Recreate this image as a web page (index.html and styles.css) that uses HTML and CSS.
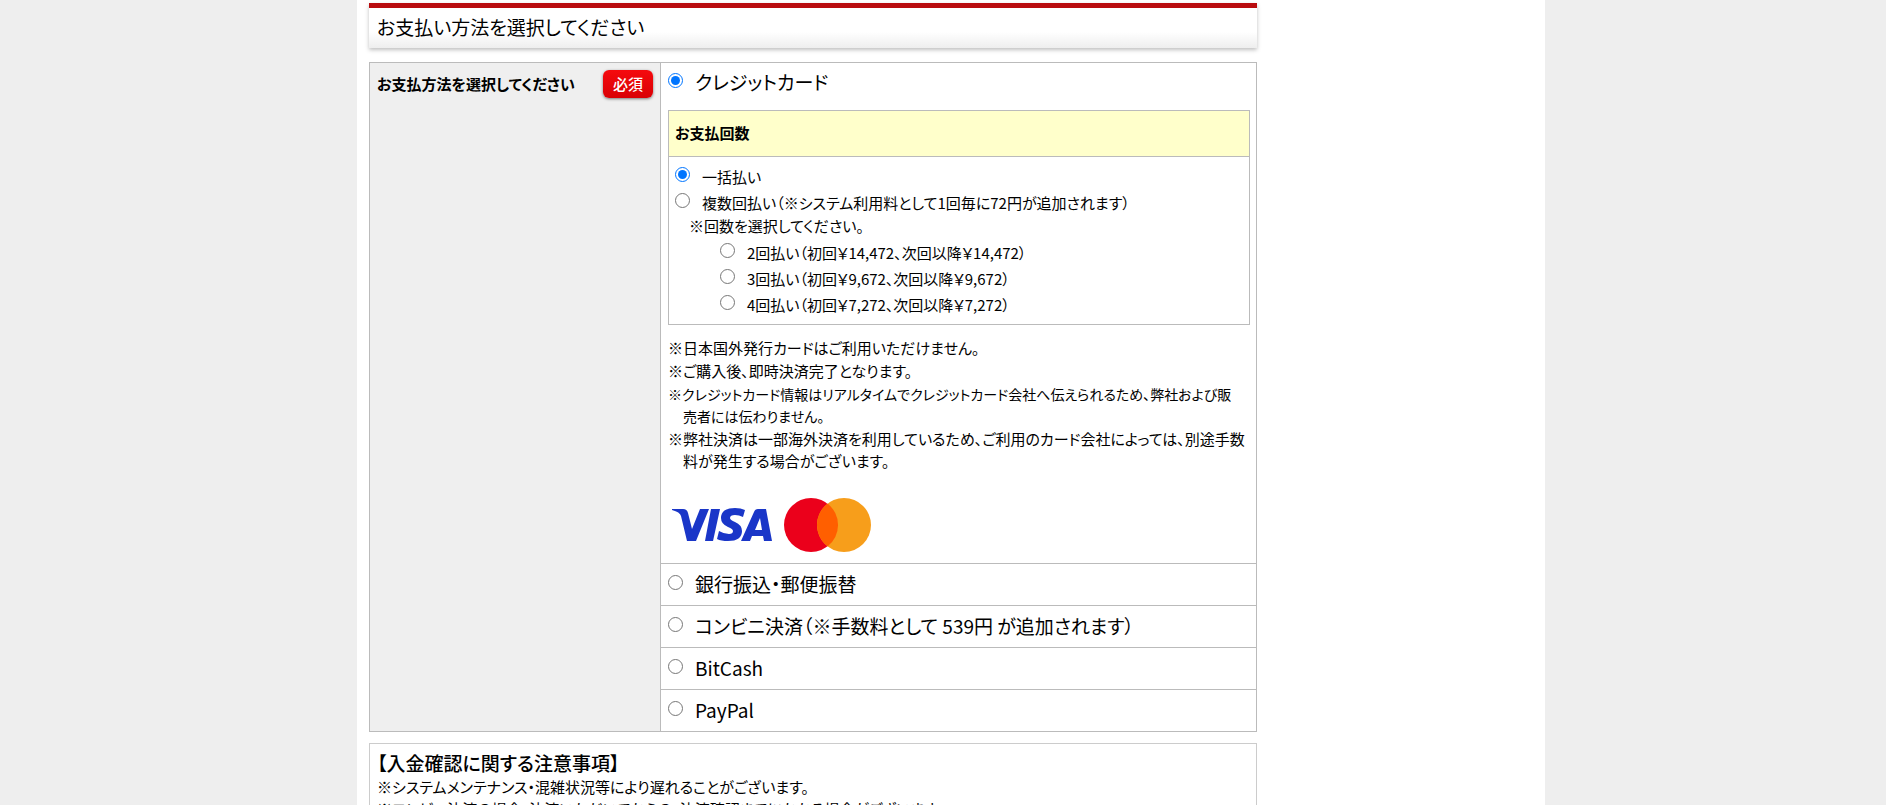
FILE: index.html
```html
<!DOCTYPE html>
<html lang="ja">
<head>
<meta charset="utf-8">
<title>お支払い方法</title>
<link rel="stylesheet" href="styles.css">
</head>
<body>
<div class="page">
<main class="content">
<h1 class="heading">お支払い方法を選択してください</h1>
<form class="payment">
<div class="side"><span class="side-title">お支払方法を選択してください</span><span class="required">必須</span></div>
<div class="methods">
<section class="method method-card">
<label class="choice"><input type="radio" name="method" checked><span>クレジットカード</span></label>
<div class="times">
<h2 class="times-title">お支払回数</h2>
<div class="times-body">
<label class="time"><input type="radio" name="time" checked><span>一括払い</span></label>
<label class="time"><input type="radio" name="time"><span>複数回払い（※システム利用料として1回毎に72円が追加されます）</span></label>
<p class="hint">※回数を選択してください。</p>
<div class="counts">
<label class="time"><input type="radio" name="count"><span>2回払い（初回￥14,472、次回以降￥14,472）</span></label>
<label class="time"><input type="radio" name="count"><span>3回払い（初回￥9,672、次回以降￥9,672）</span></label>
<label class="time"><input type="radio" name="count"><span>4回払い（初回￥7,272、次回以降￥7,272）</span></label>
</div>
</div>
</div>
<ul class="notes">
<li>日本国外発行カードはご利用いただけません。</li>
<li>ご購入後、即時決済完了となります。</li>
<li class="dense">クレジットカード情報はリアルタイムでクレジットカード会社へ伝えられるため、弊社および販<br>売者には伝わりません。</li>
<li>弊社決済は一部海外決済を利用しているため、ご利用のカード会社によっては、別途手数料が発生する場合がございます。</li>
</ul>
<svg class="brands" viewBox="0 0 204 60" role="img" aria-label="VISA Mastercard">
<g fill="#1a36c8">
<path d="M4 11H15Q19 11 20 15L24 31L32 11H41L28 43H19L13 18Q12 14 4 12Z"/>
<path d="M43 11H52L45 43H37Z"/>
<path d="M77 12L75 19Q71 17 67 17Q62 17 62 20Q62 22 67 24Q74 27 74 33Q74 43 60 43Q53 43 49 41L51 33Q56 36 61 36Q65 36 65 33Q65 31 60 29Q53 26 53 20Q53 10 67 10Q73 10 77 12Z"/>
<path fill-rule="evenodd" d="M90 11H98L104 43H96L95 38H84L82 43H73L86 14Q87 11 90 11ZM92 20L87 32H94Z"/>
</g>
<circle cx="143" cy="27" r="27" fill="#eb001b"/>
<circle cx="176" cy="27" r="27" fill="#f79e1b"/>
<path d="M159.500 5.600A27 27 0 0 1 159.500 48.400A27 27 0 0 1 159.500 5.600Z" fill="#ff5f00"/>
</svg>
</section>
<section class="method"><label class="choice"><input type="radio" name="method"><span>銀行振込・郵便振替</span></label></section>
<section class="method"><label class="choice"><input type="radio" name="method"><span>コンビニ決済（※手数料として 539円 が追加されます）</span></label></section>
<section class="method"><label class="choice"><input type="radio" name="method"><span>BitCash</span></label></section>
<section class="method"><label class="choice"><input type="radio" name="method"><span>PayPal</span></label></section>
</div>
</form>
<section class="caution">
<h2 class="caution-title">【入金確認に関する注意事項】</h2>
<p>※システムメンテナンス・混雑状況等により遅れることがございます。</p>
<p>※コンビニ決済の場合、決済いただいてからの、決済確認までにかかる場合がございます。</p>
</section>
</main>
</div>
</body>
</html>
```
FILE: styles.css
```css
* { box-sizing: border-box; }
html { height: 100%; overflow: hidden; }
body {
  height: 100%;
  margin: 0;
  overflow: hidden;
  background: #eee;
  color: #000;
  font: 15px/22px "Noto Sans CJK JP", sans-serif;
  font-feature-settings: "palt";
}
h1, h2, p, ul { margin: 0; padding: 0; }
.page {
  width: 63%;
  min-height: 100%;
  margin-left: 357px;
  padding: 3px 12px 0;
  background: #fff;
}
.content { max-width: 888px; }
.heading {
  padding: 6px 8px 8px;
  border-top: 5px solid #b90c0f;
  background: linear-gradient(#fff 60%, #eee);
  box-shadow: 0 2px 4px rgba(0, 0, 0, .25);
  font-size: 19px;
  font-weight: 400;
  line-height: 26px;
}
.payment {
  display: grid;
  grid-template-columns: 291px 1fr;
  margin-top: 14px;
  border: 1px solid #bbb;
}
.side {
  display: flex;
  justify-content: space-between;
  align-items: flex-start;
  padding: 7px 7px 0;
  border-right: 1px solid #bbb;
  background: #efefef;
}
.side-title { font-weight: 700; line-height: 28px; }
.required {
  padding: 0 10px;
  border-radius: 6px;
  background: linear-gradient(#f50a0e, #d90005);
  box-shadow: 0 1px 3px rgba(0, 0, 0, .5);
  color: #fff;
  font-weight: 500;
  line-height: 28px;
}
.method { padding: 7px 6px 8px 7px; }
.method + .method { border-top: 1px solid #bbb; }
.choice, .time { display: flex; align-items: flex-start; }
.choice { font-size: 19px; line-height: 26px; }
.choice input { width: 15px; height: 15px; margin: 4px 12px 0 0; }
.time input { width: 15px; height: 15px; margin: 3px 12px 0 0; }
.method.method-card { padding-top: 6px; padding-bottom: 5px; }
.times { margin-top: 15px; border: 1px solid #bbb; }
.times-title {
  padding: 11px 6px 12px;
  border-bottom: 1px solid #bbb;
  background: #ffffcb;
  font-size: 15px;
  line-height: 22px;
}
.times-body { padding: 7px 6px 6px; }
.time { line-height: 26px; }
.hint { padding-left: 14px; line-height: 20px; }
.counts { margin-top: 4px; padding-left: 45px; }
.notes { display: grid; gap: 1px; margin-top: 12px; list-style: none; }
.notes li { padding-left: 15px; text-indent: -15px; }
.notes li::before { content: "※"; }
.notes .dense { font-size: 14px; }
.brands { display: block; width: 204px; height: 60px; margin-top: 26px; }
.caution { margin-top: 11px; padding: 6px 7px; border: 1px solid #ccc; }
.caution-title { font-size: 19px; font-weight: 500; line-height: 26px; }
```
